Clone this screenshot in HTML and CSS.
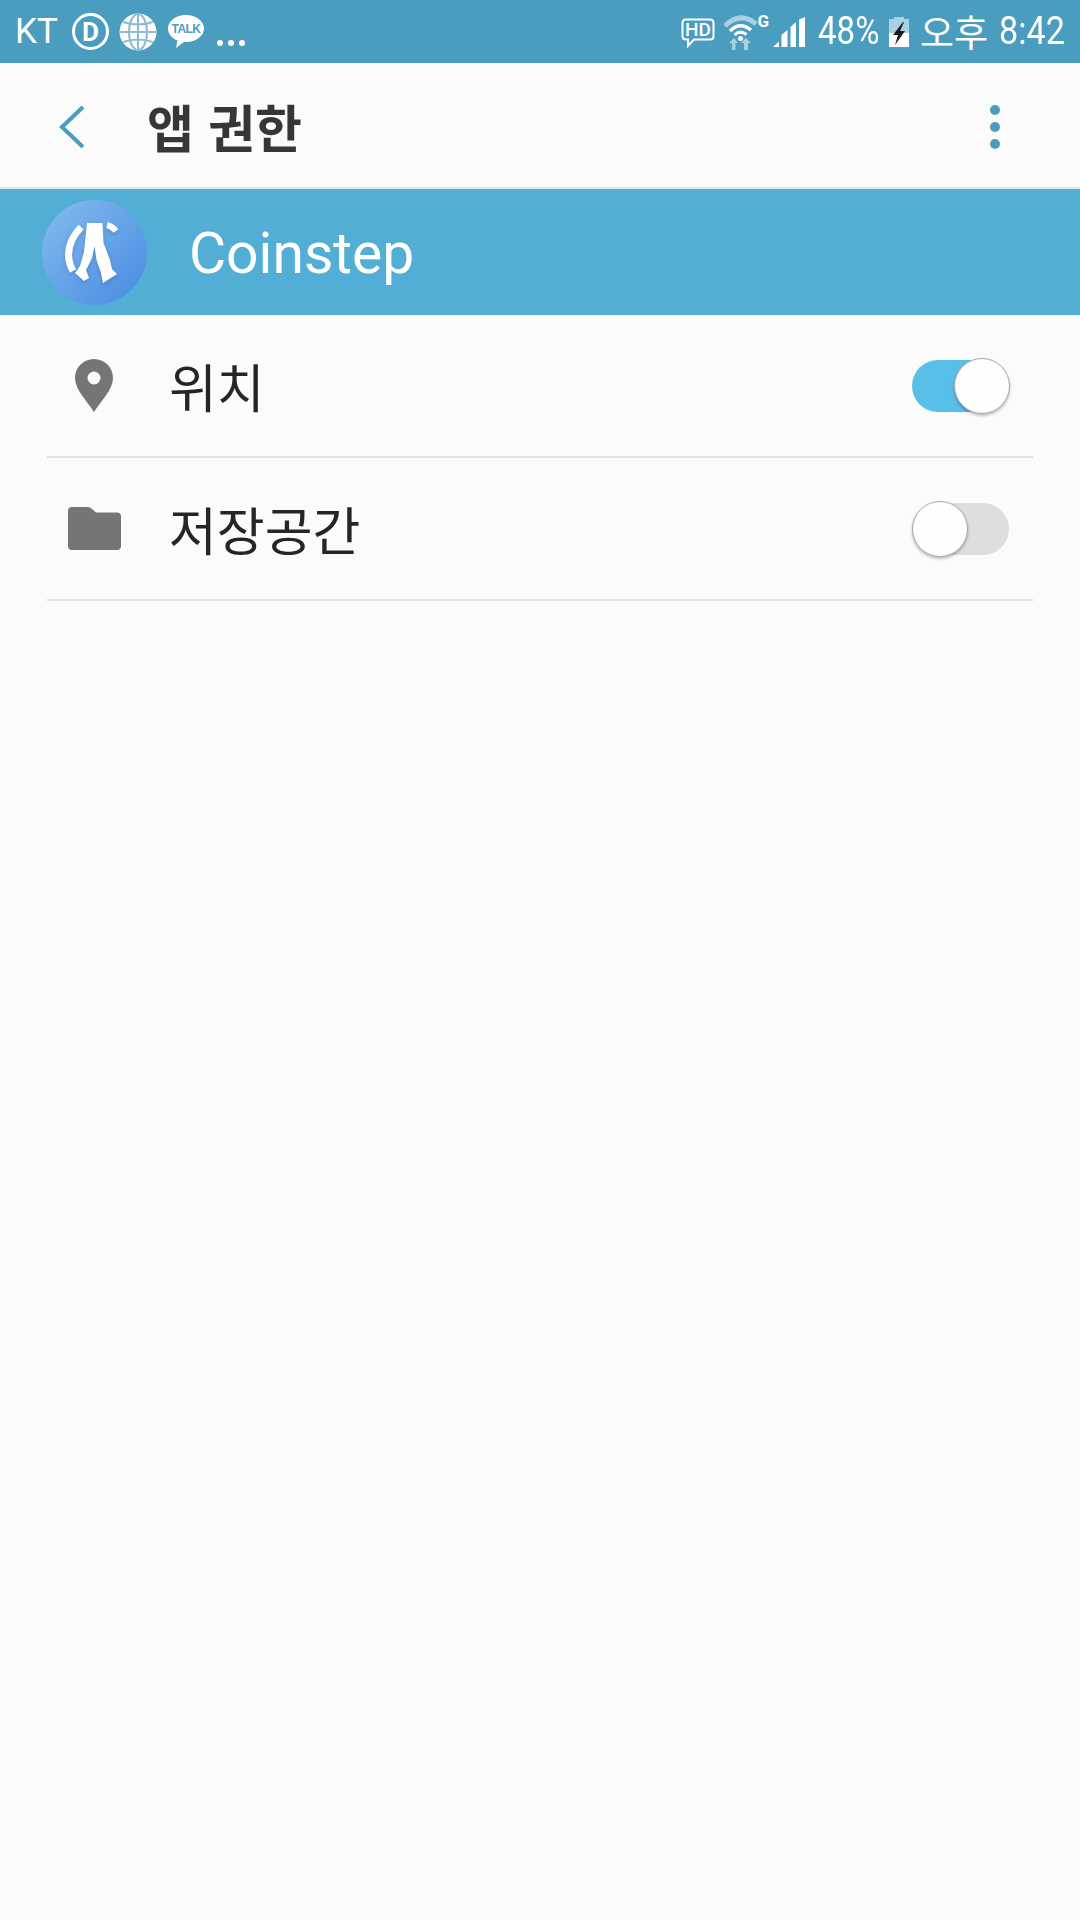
FILE: index.html
```html
<!DOCTYPE html>
<html lang="ko">
<head>
    <meta charset="UTF-8">
    <meta name="viewport" content="width=device-width, initial-scale=1.0">
    <title>앱 권한</title>
    <link rel="stylesheet" href="styles.css">
</head>
<body>
    <div class="status-bar">
        <span class="carrier">KT</span>
        <span class="d-ring">D</span>
        <svg class="globe" viewBox="0 0 38 38">
            <circle cx="19" cy="19" r="18.5" fill="#fff"/>
            <g fill="none" stroke="#8dbdd3" stroke-width="2">
                <ellipse cx="19" cy="19" rx="9" ry="18"/>
                <path d="M19 1V37M1 19H37M4 9Q19 14 34 9M4 29Q19 24 34 29"/>
            </g>
        </svg>
        <svg class="talk" viewBox="0 0 36 36">
            <path d="M18 1C8 1 0 7 0 14.500C0 20 4 24.500 9.500 26.500L8 34L16 28C16.500 28 17.500 28 18 28C28 28 36 22 36 14.500C36 7 28 1 18 1Z" fill="#fff"/>
            <text x="18" y="19" class="talk-text" text-anchor="middle">TALK</text>
        </svg>
        <span class="more-dots"><i></i><i></i><i></i></span>

        <div class="status-right">
            <svg class="hd" viewBox="0 0 34 30">
                <path d="M5 1.500H29Q32.500 1.500 32.500 5V18Q32.500 21.500 29 21.500H13L7 28V21.500H5Q1.500 21.500 1.500 18V5Q1.500 1.500 5 1.500Z" fill="none" stroke="#fff" stroke-width="2"/>
                <text x="17" y="18" class="hd-text" text-anchor="middle">HD</text>
            </svg>
            <svg class="wifi" viewBox="0 0 46 36">
                <path d="M1 12Q16 -3 32 10" fill="none" stroke="#a9d0e0" stroke-width="5"/>
                <path d="M6 17Q16 7 27 16" fill="none" stroke="#fff" stroke-width="3.500"/>
                <path d="M10.500 21Q16 15.500 22.500 20.500" fill="none" stroke="#fff" stroke-width="3"/>
                <circle cx="16.500" cy="24.500" r="2.500" fill="#fff"/>
                <path d="M8 36V29H5L10 24L14 29H11.500V36ZM20 36V29H17L22 24L27 29H24V36Z" fill="#a9d0e0"/>
                <text x="33.500" y="13" class="wifi-g">G</text>
            </svg>
            <svg class="signal" viewBox="0 0 32 30">
                <path d="M0 30L6 24.500V30ZM8.500 30V18L14.500 13V30ZM17.500 30V10L23 5V30ZM26 30V2.500L32 0V30Z" fill="#fff"/>
            </svg>
            <span class="status-num pct">48%</span>
            <svg class="battery" viewBox="0 0 20 30">
                <path d="M5 0H15V2H20V30H0V2H5Z" fill="#a9d0e0"/>
                <path d="M0 16H20V30H0Z" fill="#fff"/>
                <path d="M14 5L4 18H9L6 28L16 14H11L15 5Z" fill="#1c1c1c"/>
            </svg>
            <span class="ampm">오후</span>
            <span class="status-num clock">8:42</span>
        </div>
    </div>

    <div class="app-bar">
        <svg class="back" viewBox="0 0 26 44">
            <path d="M24 2L3 22L24 42" fill="none" stroke="#4a9dbf" stroke-width="4"/>
        </svg>
        <h1>앱 권한</h1>
        <span class="menu"><i></i><i></i><i></i></span>
    </div>

    <div class="app-header">
        <svg class="app-icon" viewBox="0 0 105 105">
            <defs>
                <linearGradient id="iconFill" x1="0.1" y1="0.1" x2="0.85" y2="0.85">
                    <stop offset="0" stop-color="#7eb8ee"/>
                    <stop offset="1" stop-color="#5091e2"/>
                </linearGradient>
            </defs>
            <circle cx="52.500" cy="52.500" r="52.500" fill="url(#iconFill)"/>
            <g class="icon-figure">
                <path d="M45 23H60.500L61.500 43L68 60L70 69L75 74L61 83L59 73L54.500 60L52.500 46L50 58L44 70L47 78L42 81L33 73L38 66L42 52Z" fill="#fff"/>
                <path d="M39 27Q19 49 31 71" fill="none" stroke="#fff" stroke-width="7"/>
                <path d="M65 25Q70 26 74 31" fill="none" stroke="#fff" stroke-width="6"/>
            </g>
        </svg>
        <span class="app-name">Coinstep</span>
    </div>

    <div class="perm-list">
        <div class="perm-row">
            <span class="perm-icon">
                <svg class="pin" viewBox="0 0 38 53">
                    <path d="M19 0C8.500 0 0 8.500 0 19C0 31 13 43 19 53C25 43 38 31 38 19C38 8.500 29.500 0 19 0ZM19 12.500A6.500 6.500 0 1 1 19 25.500A6.500 6.500 0 1 1 19 12.500Z" fill="#757575" fill-rule="evenodd"/>
                </svg>
            </span>
            <span class="perm-label">위치</span>
            <span class="switch on"><span class="knob"></span></span>
        </div>
        <div class="perm-row">
            <span class="perm-icon">
                <svg class="folder" viewBox="0 0 53 43">
                    <path d="M4 0H20Q22 0 24 2L28 5.500H49Q53 5.500 53 9.500V39Q53 43 49 43H4Q0 43 0 39V4Q0 0 4 0Z" fill="#757575"/>
                </svg>
            </span>
            <span class="perm-label">저장공간</span>
            <span class="switch"><span class="knob"></span></span>
        </div>
    </div>
</body>
</html>
```

FILE: styles.css
```css
* {
    box-sizing: border-box;
}
body {
    margin: 0;
    width: 1080px;
    height: 1920px;
    overflow: hidden;
    background-color: #fbfbfb;
    font-family: Roboto, "Noto Sans CJK KR", sans-serif;
}

/* status bar */
.status-bar {
    display: flex;
    align-items: center;
    height: 63px;
    padding-left: 15px;
    background-color: #4a9dbf;
    color: #fff;
}
.carrier {
    width: 57px;
    font-size: 35px;
    line-height: 63px;
}
.d-ring {
    display: flex;
    align-items: center;
    justify-content: center;
    width: 37px;
    height: 37px;
    border: 3px solid #fff;
    border-radius: 50%;
    font-size: 26px;
    font-weight: 700;
}
.globe {
    width: 38px;
    height: 38px;
    margin-left: 10px;
}
.talk {
    width: 36px;
    height: 36px;
    margin-left: 11px;
}
.talk-text {
    font-family: "Liberation Sans", sans-serif;
    font-size: 12px;
    font-weight: 700;
    fill: #4a9dbf;
    letter-spacing: -0.5px;
}
.more-dots {
    display: flex;
    gap: 5px;
    margin: 22px 0 0 13px;
}
.more-dots i {
    width: 6px;
    height: 6px;
    border-radius: 50%;
    background: #fff;
}
.status-right {
    display: flex;
    align-items: center;
    margin-left: auto;
    padding-right: 15px;
}
.hd {
    width: 34px;
    height: 30px;
    margin-top: 3px;
}
.hd-text {
    font-size: 19px;
    font-weight: 500;
    fill: #fff;
}
.wifi {
    width: 46px;
    height: 36px;
    margin-left: 9px;
}
.wifi-g {
    font-size: 17px;
    font-weight: 700;
    fill: #fff;
}
.signal {
    width: 32px;
    height: 30px;
    margin-left: 3px;
}
.status-num {
    display: inline-block;
    font-size: 38px;
    line-height: 63px;
    white-space: nowrap;
    transform: scaleX(0.87);
    transform-origin: left center;
}
.pct {
    width: 72px;
    margin: 0 -10px 0 13px;
}
.battery {
    width: 20px;
    height: 30px;
    margin-left: 9px;
}
.ampm {
    width: 74px;
    margin: 0 -4px 0 11px;
    font-family: "Noto Sans CJK KR", sans-serif;
    font-size: 37px;
    line-height: 63px;
    white-space: nowrap;
}
.clock {
    width: 74px;
    margin: 0 -8px 0 9px;
    transform: scaleX(0.9);
}

/* title bar */
.app-bar {
    display: flex;
    align-items: center;
    height: 126px;
    padding-left: 59px;
    border-bottom: 2px solid #e3e3e3;
}
.back {
    width: 26px;
    height: 44px;
    margin-top: 3px;
}
.app-bar h1 {
    margin: 2px 0 0 62px;
    font-family: "Noto Sans CJK KR", sans-serif;
    font-size: 51px;
    font-weight: 700;
    color: #363636;
}
.menu {
    display: flex;
    flex-direction: column;
    gap: 7px;
    margin: 3px 80px 0 auto;
}
.menu i {
    width: 10px;
    height: 10px;
    border-radius: 50%;
    background: #4a9dbf;
}

/* app name */
.app-header {
    display: flex;
    align-items: center;
    height: 126px;
    padding-left: 42px;
    background-color: #52aed5;
}
.app-icon {
    width: 105px;
    height: 105px;
}
.icon-figure {
    filter: drop-shadow(0 2px 2px rgba(0, 0, 0, 0.15));
}
.app-name {
    margin: 3px 0 0 42px;
    font-size: 57px;
    color: #fff;
}

/* permission rows */
.perm-list {
    padding: 0 47px;
}
.perm-row {
    display: flex;
    align-items: center;
    height: 143px;
    border-bottom: 2px solid #e2e2e2;
}
.perm-icon {
    display: flex;
    justify-content: center;
    width: 94px;
}
.pin {
    width: 38px;
    height: 53px;
}
.folder {
    width: 53px;
    height: 43px;
}
.perm-label {
    margin-left: 28px;
    font-family: "Noto Sans CJK KR", sans-serif;
    font-size: 52px;
    color: #252525;
}
.switch {
    position: relative;
    width: 97px;
    height: 52px;
    margin-left: auto;
    margin-right: 24px;
    border-radius: 26px;
    background-color: #dedede;
}
.switch.on {
    background-color: #58c0e8;
}
.knob {
    position: absolute;
    top: -2px;
    left: 0;
    width: 56px;
    height: 56px;
    border: 1px solid #a8a8a8;
    border-radius: 50%;
    background: #fefefe;
    box-shadow: 0 2px 3px rgba(0, 0, 0, 0.25);
}
.switch.on .knob {
    left: 42px;
}
```
